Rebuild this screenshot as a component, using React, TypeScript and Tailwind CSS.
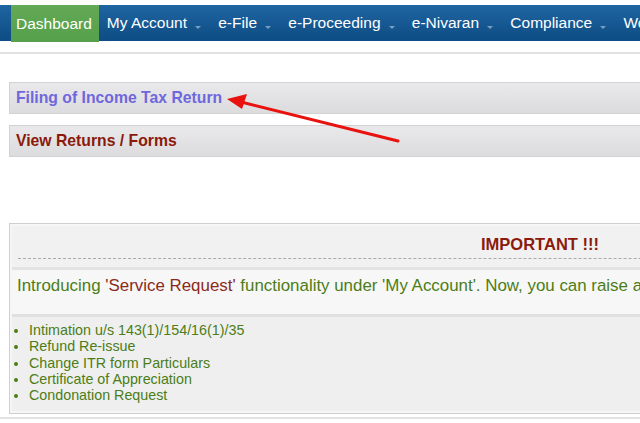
import { ReactNode } from "react";

const MENU = ["My Account", "e-File", "e-Proceeding", "e-Nivaran", "Compliance", "Worklist"];

function Caret() {
  return (
    <span className="ml-[8px] mt-[8px] inline-block w-0 h-0 border-l-[3px] border-r-[3px] border-t-[3px] border-l-transparent border-r-transparent border-t-[#7a9ec2]" />
  );
}

function Bar({ children, color }: { children: ReactNode; color: string }) {
  return (
    <div className="h-[32px] border border-[#d2d2d4] bg-gradient-to-b from-[#e9e9eb] to-[#dcdcde] flex items-center px-[6px]">
      <span className={`text-[15.75px] font-bold ${color}`}>{children}</span>
    </div>
  );
}

export default function App() {
  return (
    <div className="w-[640px] h-[423px] overflow-hidden bg-white font-['Liberation_Sans',Arial,sans-serif]">
      <div className="w-[1100px]">
        {/* top menu */}
        <div className="mt-[5px] h-[36px] bg-gradient-to-b from-[#1f65a1] to-[#0d4c84] flex items-stretch pl-[11px] text-white text-[15.5px]">
          <div className="h-[37px] px-[5px] pr-[7px] bg-gradient-to-b from-[#63a957] to-[#56a04a] flex items-center">Dashboard</div>
          {MENU.map(m => (
            <div key={m} className="flex items-center pl-[8px] pr-[9.3px]">
              {m}
              <Caret />
            </div>
          ))}
        </div>
        <div className="mt-[11px] h-[2px] bg-[#e2e2e2]" />

        <div className="relative mt-[28px] ml-[9px] flex flex-col gap-[11px]">
          <Bar color="text-[#6f67dc]">Filing of Income Tax Return</Bar>
          <Bar color="text-[#8b1a0c]">View Returns / Forms</Bar>
          <svg className="absolute left-0 top-0" width="640" height="80" viewBox="0 0 640 80">
            <line x1="389" y1="59" x2="232" y2="20" stroke="#e8120f" strokeWidth="3" strokeLinecap="round" />
            <polygon points="218,17 238,12 233,27" fill="#e8120f" />
          </svg>
        </div>

        {/* notice panel */}
        <div className="mt-[66px] ml-[9px] w-[1062px] border border-[#cfcfcf] bg-[#f6f6f6] p-[2px]">
          <div className="h-[41px] bg-[#f1f1f1] px-[6px] pt-[6px]">
            <div className="border-b border-dashed border-[#a9a9a9] h-[27px] text-center">
              <span className="text-[16.5px] font-bold text-[#8b1a0c]">IMPORTANT !!!</span>
            </div>
          </div>
          <div className="h-[3px] bg-[#e3e3e3]" />
          <div className="h-[44px] px-[5px] pt-[3px] text-[16.9px] text-[#4c7d16] bg-[#f7f7f7] whitespace-nowrap">
            Introducing <span className="text-[#8b2a1a]">'Service Request'</span> functionality under 'My Account'. Now, you can raise a service request for:
          </div>
          <div className="border-t-[3px] border-[#e0e0e0] bg-[#efefef] pt-[5px] pb-[8px] pl-[15px]">
            <ul className="list-disc pl-[2px] text-[14.3px] leading-[16.25px] text-[#4c7d16] marker:text-[#4c7d16]">
              <li>Intimation u/s 143(1)/154/16(1)/35</li>
              <li>Refund Re-issue</li>
              <li>Change ITR form Particulars</li>
              <li>Certificate of Appreciation</li>
              <li>Condonation Request</li>
            </ul>
          </div>
        </div>
        <div className="mt-[3px] h-[2px] bg-[#e2e2e2]" />
      </div>
    </div>
  );
}
